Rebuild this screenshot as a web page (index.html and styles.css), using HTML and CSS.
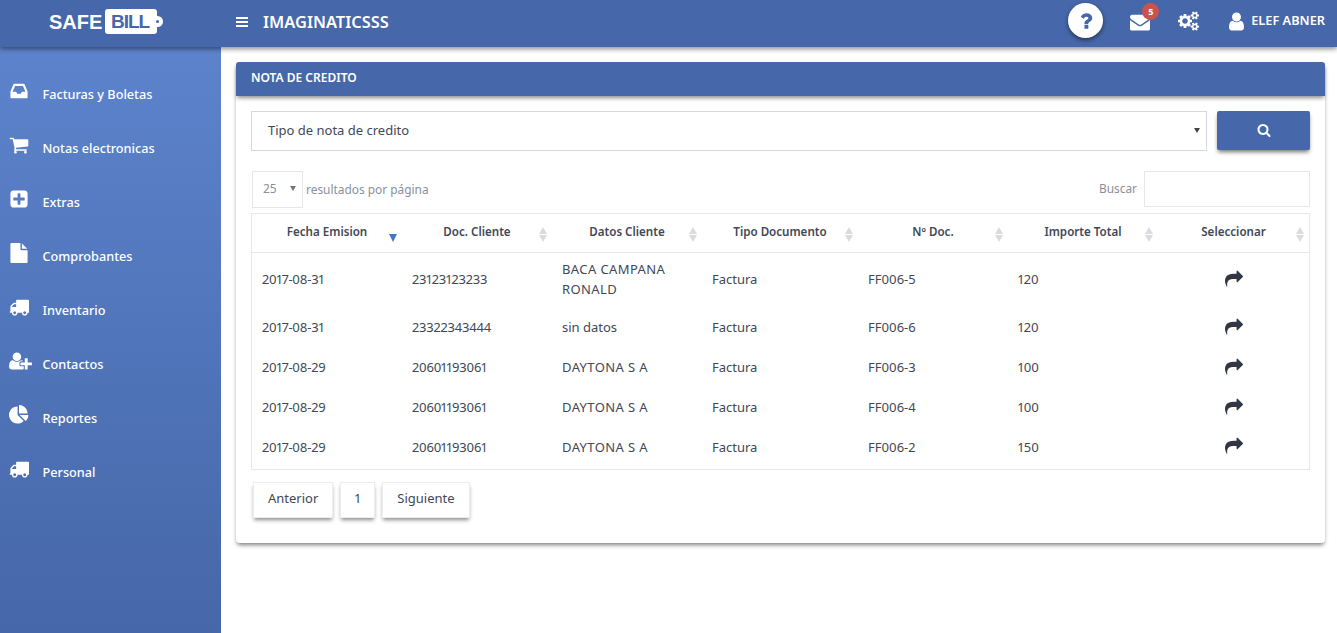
FILE: index.html
```html
<!DOCTYPE html>
<html lang="es">
<head>
<meta charset="utf-8">
<title>Safe Bill</title>
<link rel="stylesheet" href="styles.css">
</head>
<body>
<svg class="sprite" xmlns="http://www.w3.org/2000/svg">
  <symbol id="i-share" viewBox="0 0 1792 1792"><path d="M1792 640q0 26-19 45l-512 512q-19 19-45 19t-45-19-19-45v-256h-224q-98 0-175.500 6t-154 21.500-133 42.500-105.500 69.500-80 101-48.500 138.500-17.500 181q0 55 5 123 0 6 2.500 23.500t2.500 26.500q0 15-8.500 25t-23.500 10q-16 0-28-17-7-9-13-22t-13.500-30-10.500-24q-127-285-127-451 0-199 53-333 162-403 875-403h224v-256q0-26 19-45t45-19 45 19l512 512q19 19 19 45z"/></symbol>
  <symbol id="i-truck" viewBox="0 0 1792 1792"><path d="M640 1408q0-52-38-90t-90-38-90 38-38 90 38 90 90 38 90-38 38-90zm-384-512h384v-256h-158q-13 0-22 9l-195 195q-9 9-9 22v30zm1280 512q0-52-38-90t-90-38-90 38-38 90 38 90 90 38 90-38 38-90zm256-1088v1024q0 15-4 26.500t-13.500 18.500-16.500 11.500-23.500 6-22.500 2-25.500 0-22.500-.5q0 106-75 181t-181 75-181-75-75-181h-384q0 106-75 181t-181 75-181-75-75-181h-64q-3 0-22.500.5t-25.500 0-22.500-2-23.500-6-16.500-11.500-13.500-18.500-4-26.500q0-26 19-45t45-19v-320q0-8-.5-35t0-38 2.500-34.500 6.500-37 14-30.500 22.500-30l198-198q19-19 50.500-32t58.500-13h160v-192q0-26 19-45t45-19h1024q26 0 45 19t19 45z"/></symbol>
</svg>

<header class="topbar">
  <div class="brand">
    <span class="brand-safe">SAFE</span>
    <span class="brand-tag">BILL<i class="brand-hole"></i></span>
  </div>
  <div class="top-left">
    <svg class="burger" viewBox="0 0 12 10"><path d="M0 0h12v2H0zM0 4h12v2H0zM0 8h12v2H0z"/></svg>
    <span class="company">IMAGINATICSSS</span>
  </div>
  <div class="top-right">
    <span class="help"><svg viewBox="0 0 1792 1792"><path d="M1088 1256v240q0 16-12 28t-28 12h-240q-16 0-28-12t-12-28v-240q0-16 12-28t28-12h240q16 0 28 12t12 28zm316-600q0 54-15.500 101t-35 76.500-55 59.500-57.500 43.500-61 35.500q-41 23-68.500 65t-27.500 67q0 17-12 32.500t-28 15.500h-240q-15 0-25.500-18.500t-10.500-37.500v-45q0-83 65-156.500t143-108.500q59-27 84-56t25-76q0-42-46.500-74t-107.500-32q-65 0-108 29-35 25-107 115-13 16-31 16-12 0-25-8l-164-125q-13-10-15.500-25t5.500-28q160-266 464-266 80 0 161 31t146 83 106 127.500 41 158.500z"/></svg></span>
    <span class="mail">
      <svg viewBox="0 0 1792 1792"><path d="M1792 710v794q0 66-47 113t-113 47h-1472q-66 0-113-47t-47-113v-794q44 49 101 87 362 246 497 345 57 42 92.500 65.500t94.500 48 110 24.500h2q51 0 110-24.500t94.500-48 92.500-65.500q170-123 498-345 57-39 100-87zm0-294q0 79-49 151t-122 123q-376 261-468 325-10 7-42.500 30.500t-54 38-52 32.500-57.500 27-50 9h-2q-23 0-50-9t-57.500-27-52-32.500-54-38-42.500-30.500q-91-64-262-182.500t-205-142.500q-62-42-117-115.500t-55-136.500q0-78 41.500-130t118.500-52h1472q65 0 112.500 47t47.500 113z"/></svg>
      <b class="badge">5</b>
    </span>
    <svg class="cogs" viewBox="0 0 1920 1792"><path d="M896 896q0-106-75-181t-181-75-181 75-75 181 75 181 181 75 181-75 75-181zm768 512q0-52-38-90t-90-38-90 38-38 90q0 53 37.500 90.500t90.500 37.500 90.500-37.500 37.500-90.500zm0-1024q0-52-38-90t-90-38-90 38-38 90q0 53 37.500 90.500t90.500 37.500 90.500-37.500 37.500-90.500zm-384 421v185q0 10-7 19.500t-16 10.500l-155 24q-11 35-32 76 34 48 90 115 7 11 7 20 0 12-7 19-23 30-82.500 89.500t-78.500 59.500q-11 0-21-7l-115-90q-37 19-77 31-11 108-23 155-7 24-30 24h-186q-11 0-20-7.500t-10-17.500l-23-153q-34-10-75-31l-118 89q-7 7-20 7-11 0-21-8-144-133-144-160 0-9 7-19 10-14 41-53t47-61q-23-44-35-82l-152-24q-10-1-17-9.500t-7-19.500v-185q0-10 7-19.500t16-10.500l155-24q11-35 32-76-34-48-90-115-7-11-7-20 0-12 7-20 22-30 82-89t79-59q11 0 21 7l115 90q34-18 77-32 11-108 23-154 7-24 30-24h186q11 0 20 7.500t10 17.500l23 153q34 10 75 31l118-89q8-7 20-7 11 0 21 8 144 133 144 160 0 8-7 19-12 16-42 54t-45 60q23 48 34 82l152 23q10 2 17 10.500t7 19.500zm640 533v140q0 16-149 31-12 27-30 52 51 113 51 138 0 4-4 7-122 71-124 71-8 0-46-47t-52-68q-20 2-30 2t-30-2q-14 21-52 68t-46 47q-2 0-124-71-4-3-4-7 0-25 51-138-18-25-30-52-149-15-149-31v-140q0-16 149-31 13-29 30-52-51-113-51-138 0-4 4-7 4-2 35-20t59-34 30-16q8 0 46 46.500t52 67.500q20-2 30-2t30 2q51-71 92-112l6-2q4 0 124 70 4 3 4 7 0 25-51 138 17 23 30 52 149 15 149 31zm0-1024v140q0 16-149 31-12 27-30 52 51 113 51 138 0 4-4 7-122 71-124 71-8 0-46-47t-52-68q-20 2-30 2t-30-2q-14 21-52 68t-46 47q-2 0-124-71-4-3-4-7 0-25 51-138-18-25-30-52-149-15-149-31v-140q0-16 149-31 13-29 30-52-51-113-51-138 0-4 4-7 4-2 35-20t59-34 30-16q8 0 46 46.500t52 67.500q20-2 30-2t30 2q51-71 92-112l6-2q4 0 124 70 4 3 4 7 0 25-51 138 17 23 30 52 149 15 149 31z"/></svg>
    <span class="user">
      <svg viewBox="0 0 1792 1792"><path d="M1536 1399q0 109-62.500 187t-150.500 78h-854q-88 0-150.500-78t-62.500-187q0-85 8.500-160.500t31.500-152 58.500-131 94-89 134.500-34.500q131 128 313 128t313-128q76 0 134.500 34.500t94 89 58.500 131 31.500 152 8.500 160.500zm-256-887q0 159-112.500 271.500t-271.500 112.500-271.500-112.500-112.500-271.500 112.500-271.500 271.500-112.500 271.500 112.500 112.500 271.500z"/></svg>
      <span class="user-name">ELEF ABNER</span>
    </span>
  </div>
</header>

<div class="shell">
  <nav class="sidebar">
    <a class="nav-item"><svg class="nav-icon" viewBox="0 0 1792 1792"><path d="M1151 960h316q-1-3-2.500-8.500t-2.500-7.500l-212-496h-708l-212 496q-1 2-2.500 7.500t-2.500 8.500h316l95 192h320zm513 30v482q0 26-19 45t-45 19h-1408q-26 0-45-19t-19-45v-482q0-62 25-123l238-552q10-25 36.500-42t52.500-17h832q26 0 52.500 17t36.500 42l238 552q25 61 25 123z"/></svg><span>Facturas y Boletas</span></a>
    <a class="nav-item"><svg class="nav-icon" viewBox="0 0 1792 1792"><path d="M704 1536q0 52-38 90t-90 38-90-38-38-90 38-90 90-38 90 38 38 90zm896 0q0 52-38 90t-90 38-90-38-38-90 38-90 90-38 90 38 38 90zm128-1088v512q0 24-16.500 42.500t-40.500 21.500l-1044 122q13 60 13 70 0 16-24 64h920q26 0 45 19t19 45-19 45-45 19h-1024q-26 0-45-19t-19-45q0-11 8-31.500t16-36 21.500-40 15.500-29.500l-177-823h-204q-26 0-45-19t-19-45 19-45 45-19h256q16 0 28.500 6.500t19.500 15.500 13 24.500 8 26 5.500 29.500 4.500 26h1201q26 0 45 19t19 45z"/></svg><span>Notas electronicas</span></a>
    <a class="nav-item"><svg class="nav-icon" viewBox="0 0 1792 1792"><path d="M1408 960v-128q0-26-19-45t-45-19h-320v-320q0-26-19-45t-45-19h-128q-26 0-45 19t-19 45v320h-320q-26 0-45 19t-19 45v128q0 26 19 45t45 19h320v320q0 26 19 45t45 19h128q26 0 45-19t19-45v-320h320q26 0 45-19t19-45zm256-544v960q0 119-84.500 203.500t-203.500 84.500h-960q-119 0-203.500-84.500t-84.500-203.500v-960q0-119 84.500-203.500t203.500-84.500h960q119 0 203.500 84.500t84.500 203.500z"/></svg><span>Extras</span></a>
    <a class="nav-item"><svg class="nav-icon" viewBox="0 0 1792 1792"><path d="M1152 512v-472q22 14 36 28l408 408q14 14 28 36h-472zm-128 32q0 40 28 68t68 28h544v1056q0 40-28 68t-68 28h-1344q-40 0-68-28t-28-68v-1600q0-40 28-68t68-28h800v544z"/></svg><span>Comprobantes</span></a>
    <a class="nav-item"><svg class="nav-icon"><use href="#i-truck"/></svg><span>Inventario</span></a>
    <a class="nav-item"><svg class="nav-icon nav-icon-wide" viewBox="0 0 2048 1792"><path d="M704 896q-159 0-271.500-112.500t-112.500-271.500 112.500-271.500 271.500-112.500 271.500 112.500 112.500 271.500-112.500 271.500-271.500 112.500zm960 128h352q13 0 22.500 9.500t9.500 22.500v192q0 13-9.500 22.500t-22.500 9.500h-352v352q0 13-9.500 22.500t-22.500 9.500h-192q-13 0-22.500-9.500t-9.500-22.500v-352h-352q-13 0-22.500-9.500t-9.500-22.500v-192q0-13 9.500-22.500t22.500-9.500h352v-352q0-13 9.500-22.500t22.500-9.500h192q13 0 22.500 9.500t9.500 22.500v352zm-736 224q0 52 38 90t90 38h256v238q-68 50-171 50h-874q-121 0-194-69t-73-190q0-53 3.500-103.500t14-109 26.500-108.500 43-97.500 62-81 85.500-53.500 111.500-20q19 0 39 17 79 61 154.500 91.500t164.500 30.500 164.500-30.500 154.500-91.500q20-17 39-17 132 0 217 96h-223q-52 0-90 38t-38 90v192z"/></svg><span>Contactos</span></a>
    <a class="nav-item"><svg class="nav-icon" viewBox="0 0 1792 1792"><path d="M768 890l546 546q-106 108-247.500 168t-298.500 60q-209 0-385.500-103t-279.500-279.500-103-385.500 103-385.500 279.500-279.500 385.500-103v762zm187 6h773q0 157-60 298.500t-168 247.500zm709-128h-768v-768q209 0 385.500 103t279.500 279.500 103 385.500z"/></svg><span>Reportes</span></a>
    <a class="nav-item"><svg class="nav-icon"><use href="#i-truck"/></svg><span>Personal</span></a>
  </nav>

  <main class="content">
    <section class="card">
      <h2 class="card-head">NOTA DE CREDITO</h2>
      <div class="card-body">
        <div class="filter">
          <div class="select-big"><span>Tipo de nota de credito</span><i class="caret caret-dark"></i></div>
          <button class="search-btn" type="button"><svg viewBox="0 0 1792 1792"><path d="M1216 832q0-185-131.500-316.500t-316.500-131.500-316.500 131.500-131.500 316.500 131.500 316.500 316.500 131.500 316.500-131.500 131.500-316.500zm512 832q0 52-38 90t-90 38q-54 0-90-38l-343-342q-179 124-399 124-143 0-273.500-55.500t-225-150-150-225-55.500-273.500 55.500-273.500 150-225 225-150 273.500-55.500 273.500 55.500 225 150 150 225 55.500 273.500q0 220-124 399l343 343q37 37 37 90z"/></svg></button>
        </div>

        <div class="tools">
          <div class="length">
            <div class="select-small"><span>25</span><i class="caret"></i></div>
            <span class="tool-label">resultados por página</span>
          </div>
          <div class="finder"><span class="tool-label">Buscar</span><div class="finder-input"></div></div>
        </div>

        <table class="grid">
          <thead>
            <tr>
              <th class="c1">Fecha Emision<i class="sort sort-down"></i></th>
              <th class="c2">Doc. Cliente<i class="sort"></i></th>
              <th class="c3">Datos Cliente<i class="sort"></i></th>
              <th class="c4">Tipo Documento<i class="sort"></i></th>
              <th class="c5">Nº Doc.<i class="sort"></i></th>
              <th class="c6">Importe Total<i class="sort"></i></th>
              <th class="c7">Seleccionar<i class="sort"></i></th>
            </tr>
          </thead>
          <tbody>
            <tr><td class="num">2017-08-31</td><td class="num">23123123233</td><td class="caps">BACA CAMPANA RONALD</td><td>Factura</td><td>FF006-5</td><td>120</td><td class="act"><svg class="share"><use href="#i-share"/></svg></td></tr>
            <tr><td class="num">2017-08-31</td><td class="num">23322343444</td><td>sin datos</td><td>Factura</td><td>FF006-6</td><td>120</td><td class="act"><svg class="share"><use href="#i-share"/></svg></td></tr>
            <tr><td class="num">2017-08-29</td><td class="num">20601193061</td><td class="caps">DAYTONA S A</td><td>Factura</td><td>FF006-3</td><td>100</td><td class="act"><svg class="share"><use href="#i-share"/></svg></td></tr>
            <tr><td class="num">2017-08-29</td><td class="num">20601193061</td><td class="caps">DAYTONA S A</td><td>Factura</td><td>FF006-4</td><td>100</td><td class="act"><svg class="share"><use href="#i-share"/></svg></td></tr>
            <tr><td class="num">2017-08-29</td><td class="num">20601193061</td><td class="caps">DAYTONA S A</td><td>Factura</td><td>FF006-2</td><td>150</td><td class="act"><svg class="share"><use href="#i-share"/></svg></td></tr>
          </tbody>
        </table>

        <div class="pager">
          <a class="page-btn">Anterior</a>
          <a class="page-btn page-num">1</a>
          <a class="page-btn">Siguiente</a>
        </div>
      </div>
    </section>
  </main>
</div>
</body>
</html>
```

FILE: styles.css
```css
* { box-sizing: border-box; }
html, body { height: 100%; }
body {
  margin: 0;
  font-family: "Noto Sans", "Open Sans", sans-serif;
  font-size: 12px;
  color: #414857;
  background: #fff;
  overflow: hidden;
}
.sprite { display: none; }
svg { fill: currentColor; display: block; }

.topbar {
  position: relative;
  z-index: 2;
  height: 47px;
  display: flex;
  align-items: center;
  background: #4667a9;
  color: #fff;
  box-shadow: 0 2px 5px rgba(0, 0, 0, .45);
}
.brand {
  width: 221px;
  padding: 0 0 4px 49px;
  display: flex;
  align-items: center;
  gap: 5px;
}
.brand-safe { width: 51px; font: 700 20px/1 "Liberation Sans", sans-serif; }
.brand-tag {
  position: relative;
  width: 52px;
  height: 25px;
  padding-left: 6px;
  background: #fff;
  border-radius: 3px;
  color: #4667a9;
  font: 700 19px/25px "Liberation Sans", sans-serif;
  letter-spacing: -1px;
}
.brand-tag::after {
  content: "";
  position: absolute;
  right: -6px;
  top: 7px;
  width: 11px;
  height: 11px;
  border-radius: 50%;
  background: #fff;
}
.brand-hole {
  position: absolute;
  z-index: 1;
  right: -2px;
  top: 11px;
  width: 3px;
  height: 3px;
  border-radius: 50%;
  background: #4667a9;
}
.top-left { display: flex; align-items: center; padding: 0 0 3px 15px; gap: 15px; }
.burger { width: 12px; height: 10px; }
.company { font-size: 16.400px; font-weight: 600; line-height: 1; }
.top-right { margin-left: auto; display: flex; align-items: center; padding: 0 12px 6px 0; }
.help {
  width: 35px;
  height: 35px;
  margin-right: 27px;
  display: flex;
  align-items: center;
  justify-content: center;
  border-radius: 50%;
  background: #fff;
  color: #4667a9;
  box-shadow: 0 2px 4px rgba(0, 0, 0, .5);
}
.help svg { width: 22px; height: 22px; }
.mail { position: relative; margin: 2px 28px 0 0; }
.mail svg { width: 20px; height: 20px; }
.badge {
  position: absolute;
  left: 12px;
  top: -9px;
  width: 17px;
  height: 17px;
  border-radius: 50%;
  background: #c9534f;
  color: #fff;
  font-size: 9px;
  font-weight: 700;
  line-height: 17px;
  text-align: center;
}
.cogs { width: 21px; height: 20px; margin-right: 27px; }
.user { display: flex; align-items: center; gap: 4px; font-size: 12px; font-weight: 600; line-height: 1; }
.user svg { width: 21px; height: 21px; margin-top: 2px; }
.user-name { font-size: 12.750px; }

.shell { display: flex; height: 586px; }
.sidebar {
  width: 221px;
  flex: none;
  padding-top: 20px;
  color: #fff;
  background: linear-gradient(#5c83cc, #4667a9);
}
.nav-item {
  height: 54px;
  display: flex;
  align-items: center;
  padding-left: 9px;
  font-size: 12.700px;
  font-weight: 500;
}
.nav-item span { margin-left: 13.500px; }
.nav-icon { width: 20px; height: 20px; margin-top: -6px; }
.nav-icon-wide { width: 23px; margin-right: -3px; }

.content { flex: 1; min-width: 0; padding: 15px 12px 0 15px; }
.card {
  height: 481px;
  border-radius: 4px;
  background: #fff;
  box-shadow: 0 3px 4px -1px rgba(0, 0, 0, .5);
}
.card-head {
  height: 34px;
  margin: 0;
  padding-left: 15px;
  border-radius: 3px 3px 0 0;
  background: #4667a9;
  color: #fff;
  font-size: 12px;
  font-weight: 600;
  line-height: 31px;
  box-shadow: 0 3px 4px -1px rgba(0, 0, 0, .45);
}
.card-body { padding: 15px; }
.filter { display: flex; gap: 10px; }
.select-big {
  flex: 1;
  height: 40px;
  padding: 0 6px 2px 16px;
  display: flex;
  align-items: center;
  justify-content: space-between;
  border: 1px solid #d3d8e2;
  font-size: 13px;
}
.caret {
  width: 0;
  height: 0;
  border-style: solid;
  border-width: 5px 3px 0;
  border-color: #777 transparent transparent;
}
.caret-dark { border-color: #444 transparent transparent; }
.search-btn {
  width: 93px;
  height: 39px;
  display: flex;
  align-items: center;
  justify-content: center;
  padding: 0 0 2px;
  border: 0;
  border-radius: 2px;
  background: #4667a9;
  color: #fff;
  box-shadow: 0 3px 4px -1px rgba(0, 0, 0, .55);
}
.search-btn svg { width: 14px; height: 14px; }

.tools {
  margin-top: 20px;
  height: 42px;
  display: flex;
  justify-content: space-between;
  color: #8a8f9c;
}
.tool-label { padding-bottom: 2px; font-size: 11.900px; }
.length { display: flex; align-items: center; gap: 3px; height: 37px; padding-left: 1px; }
.select-small {
  width: 51px;
  height: 37px;
  padding: 0 6px 2px 10px;
  display: flex;
  align-items: center;
  justify-content: space-between;
  border: 1px solid #e6e7eb;
}
.finder { display: flex; align-items: center; gap: 7px; height: 36px; }
.finder-input { width: 166px; height: 36px; border: 1px solid #e6e7eb; }

.grid {
  width: 1059px;
  border-collapse: collapse;
  table-layout: fixed;
  border: 1px solid #e6e7eb;
  font-size: 13px;
  font-variant-numeric: proportional-nums;
}
.grid th {
  position: relative;
  height: 39px;
  border-bottom: 1px solid #e6e7eb;
  font-size: 11.600px;
  font-weight: 600;
  text-align: center;
  padding: 0 0 2px;
  line-height: 20px;
}
.grid td {
  height: 40px;
  padding: 6px 10px 10px;
  line-height: 20px;
  vertical-align: middle;
}
.grid tbody tr:first-child td { height: 56px; }
.grid .caps { letter-spacing: .4px; }
.grid .num { letter-spacing: -.2px; }
.c1 { width: 150.500px; }
.c2, .c3, .c5, .c6 { width: 150px; }
.c4 { width: 156px; }
.c7 { width: 151.500px; }
.grid .act { padding: 0; color: #2f3744; }
.share { width: 18px; height: 18px; margin: -5px auto 0; }

.sort {
  position: absolute;
  right: 4px;
  top: 13px;
  width: 9px;
  height: 15px;
}
.sort::before, .sort::after {
  content: "";
  position: absolute;
  left: 0;
  border-style: solid;
  border-color: transparent;
  border-width: 0 4.500px;
}
.sort::before { top: 0; border-bottom: 7px solid #d9dbdf; }
.sort::after { bottom: 0; border-top: 7px solid #d9dbdf; }
.sort-down::before { display: none; }
.sort-down::after { border-top: 8px solid #4a74c9; }

.pager { display: flex; gap: 7px; margin-top: 12px; padding-left: 2px; }
.page-btn {
  height: 36px;
  padding: 0 14px 3px;
  display: flex;
  align-items: center;
  font-size: 13px;
  background: #fff;
  border: 1px solid #eceded;
  box-shadow: 0 3px 4px -1px rgba(0, 0, 0, .45);
}
.page-num { width: 35px; padding: 0 0 3px; justify-content: center; }
```
